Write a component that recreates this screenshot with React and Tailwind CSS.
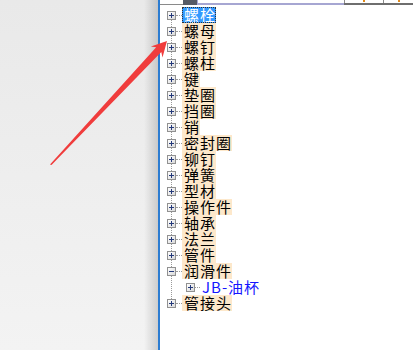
import React from "react";

const items = [
  "螺栓", "螺母", "螺钉", "螺柱", "键", "垫圈", "挡圈", "销", "密封圈", "铆钉",
  "弹簧", "型材", "操作件", "轴承", "法兰", "管件", "润滑件", "JB-油杯", "管接头",
];

function Box({ open }) {
  return (
    <div className="relative z-10 w-[9px] h-[9px] shrink-0 border border-[#919191] bg-linear-to-br from-white to-[#d9d9d9] flex items-center justify-center">
      <div className="absolute w-[5px] h-px bg-[#24397a]" />
      {!open && <div className="absolute w-px h-[5px] bg-[#24397a]" />}
    </div>
  );
}

function Row({ label, selected, open, child }) {
  return (
    <div className={"flex items-center h-4 " + (child ? "pl-[19px]" : "")}>
      <Box open={open} />
      <div className={"h-px shrink-0 border-t border-dotted border-[#9a9a9a] " + (child ? "w-[5px]" : "w-[6px]")} />
      {child ? (
        <span className="h-4 pl-[2px] text-[#1515ff] leading-4 whitespace-nowrap tracking-[1px]">{label}</span>
      ) : (
        <span
          className={
            "h-4 pl-[2px] leading-4 whitespace-nowrap tracking-[1px] " +
            (selected
              ? "bg-[#3399ff] text-white outline outline-dotted outline-[#333] -outline-offset-1"
              : "bg-[#fde8cb] text-black")
          }
        >
          {label}
        </span>
      )}
    </div>
  );
}

export default function App() {
  return (
    <div
      className="relative w-[413px] h-[350px] overflow-hidden flex"
      style={{ fontFamily: '"Noto Sans CJK SC", "Noto Sans", sans-serif' }}
    >
      <div className="w-[158px] shrink-0 h-full flex bg-linear-to-b from-[#e9e9e9] to-[#f3f3f3]">
        <div className="flex-1" />
        <div className="w-[14px] h-full bg-linear-to-r from-transparent to-black/15" />
      </div>
      <div className="w-[2px] shrink-0 h-full bg-[#2c7cd1]" />
      <div className="w-[253px] shrink-0 h-full bg-white flex flex-col">
        <div className="h-[5px] flex shrink-0">
          <div className="w-[23px] shrink-0 border-b border-[#8a8a8a]" />
          <div className="w-[14px] shrink-0 bg-[#555a66]" />
          <div className="w-[147px] shrink-0 border-l border-b-2 border-[#a6a6d2]" />
          <div className="flex-1 flex border-b-2 border-[#6e6e6e]">
            <div className="w-[39px] shrink-0 border-l border-[#8a8a8a] flex justify-center">
              <div className="w-[2px] h-[2px] bg-[#e08a1a]" />
            </div>
            <div className="flex-1 border-l border-[#8a8a8a] flex justify-center">
              <div className="w-[2px] h-[2px] bg-[#e08a1a]" />
            </div>
          </div>
        </div>
        <div className="relative pt-[2px] pl-[7px] text-[15px]">
          <div className="absolute left-[11px] top-[10px] h-[288px] border-l border-dotted border-[#9a9a9a]" />
          {items.map((t, i) => (
            <Row
              key={t}
              label={t}
              selected={i === 0}
              open={t === "润滑件"}
              child={t === "JB-油杯"}
            />
          ))}
        </div>
      </div>
      <svg
        className="absolute inset-0 pointer-events-none"
        width="413"
        height="350"
        viewBox="0 0 413 350"
      >
        <polygon
          points="50,164.5 156.2,47.3 150.9,46.4 167,41 162.5,57.4 161.3,52.1 51.5,165"
          fill="#f03c3c"
        />
      </svg>
    </div>
  );
}
